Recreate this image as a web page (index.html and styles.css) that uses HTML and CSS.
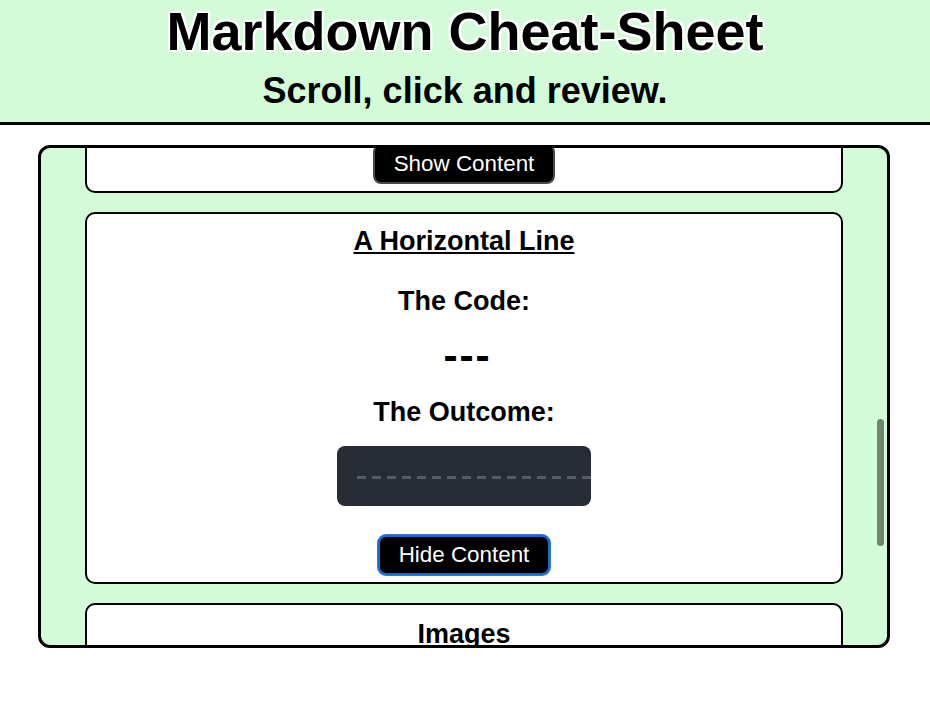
FILE: index.html
```html
<!DOCTYPE html>
<html lang="en">
<head>
<meta charset="utf-8">
<title>Markdown Cheat-Sheet</title>
<link rel="stylesheet" href="styles.css">
</head>
<body>
<header class="site-header">
  <h1 class="site-title">Markdown Cheat-Sheet</h1>
  <h2 class="site-tagline">Scroll, click and review.</h2>
</header>
<main class="sheet">
  <div class="sheet-scroll">
    <section class="card">
      <button class="toggle" type="button">Show Content</button>
    </section>
    <section class="card">
      <h3 class="card-title">A Horizontal Line</h3>
      <h4 class="label">The Code:</h4>
      <p class="code">---</p>
      <h4 class="label after-code">The Outcome:</h4>
      <div class="outcome"><div class="rule"></div></div>
      <button class="toggle is-focused" type="button">Hide Content</button>
    </section>
    <section class="card">
      <h3 class="card-title plain">Images</h3>
    </section>
  </div>
  <div class="thumb"></div>
</main>
</body>
</html>
```
FILE: styles.css
```css
* { box-sizing: border-box; }

body {
  margin: 0;
  background: #fff;
  color: #000;
  font-family: "Liberation Sans", Arial, Helvetica, sans-serif;
}

.site-header {
  background: #d3fbd8;
  border-bottom: 3px solid #000;
  padding: 0 0 10px;
  text-align: center;
}

.site-title {
  margin: 0;
  font-size: 54px;
  line-height: 62px;
  font-weight: 700;
  text-shadow:
    -2px -2px 0 #fff, 2px -2px 0 #fff, -2px 2px 0 #fff, 2px 2px 0 #fff,
    0 2px 0 #fff, 0 -2px 0 #fff, 2px 0 0 #fff, -2px 0 0 #fff;
}

.site-tagline {
  margin: 8px 0 0;
  font-size: 36px;
  line-height: 42px;
  font-weight: 700;
}

.sheet {
  position: relative;
  margin: 20px 40px 0 38px;
  height: 503px;
  border: 3px solid #000;
  border-radius: 12px;
  background: #d3fbd8;
  overflow: hidden;
}

.sheet-scroll {
  margin-top: -35px;
  padding: 0 44px;
  display: flex;
  flex-direction: column;
  gap: 19px;
}

.card {
  background: #fff;
  border: 2px solid #000;
  border-radius: 10px;
  padding: 0 20px 7px;
  display: flex;
  flex-direction: column;
  align-items: center;
  text-align: center;
}

.card-title {
  margin: 11px 0 0;
  font-size: 27px;
  line-height: 32px;
  font-weight: 700;
  text-decoration: underline;
}

.card-title.plain {
  margin-top: 13px;
  text-decoration: none;
}

.label {
  margin: 28px 0 0;
  font-size: 27px;
  line-height: 32px;
  font-weight: 700;
}

.label.after-code {
  margin-top: 27px;
}

.code {
  margin: 29px 0 0;
  font-family: "DejaVu Sans Mono", "Liberation Mono", monospace;
  font-size: 35px;
  line-height: 23px;
  letter-spacing: -5px;
  font-weight: 700;
}

.outcome {
  margin-top: 18px;
  width: 254px;
  height: 60px;
  padding-left: 20px;
  background: #282c34;
  border-radius: 8px;
  overflow: hidden;
  display: flex;
  align-items: center;
}

.rule {
  flex-shrink: 0;
  width: 300px;
  height: 3px;
  margin-top: 2px;
  background: repeating-linear-gradient(to right, #555c69 0 9px, transparent 9px 15px);
}

.toggle {
  margin-top: 29px;
  padding: 5px 19px;
  border: 2px solid #4a4a4a;
  border-radius: 8px;
  background: #000;
  color: #fff;
  font-family: "Liberation Sans", Arial, Helvetica, sans-serif;
  font-size: 22.4px;
  line-height: 26px;
}

.toggle.is-focused {
  border-color: #1c6bc9;
  box-shadow: 0 0 0 1px #2f7ad6;
}

.thumb {
  position: absolute;
  top: 271px;
  right: 3px;
  width: 7px;
  height: 127px;
  border-radius: 4px;
  background: rgba(0, 0, 0, 0.47);
}
```
